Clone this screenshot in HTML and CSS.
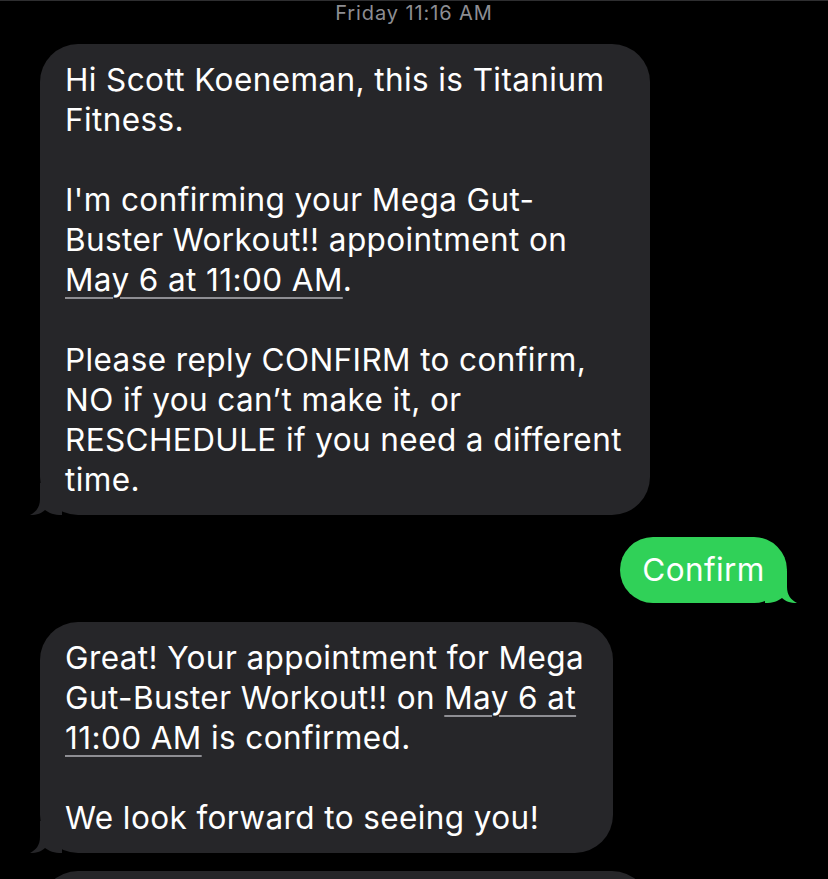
FILE: index.html
```html
<!DOCTYPE html>
<html>
<head>
<meta charset="utf-8">
<link rel="stylesheet" href="styles.css">
</head>
<body>
<div class="thread">
  <div class="stamp">Friday 11:16 AM</div>

  <div class="bubble in b1">
    <p>Hi Scott Koeneman, this is Titanium<br>Fitness.</p>
    <p>I'm confirming your Mega Gut-<br>Buster Workout!! appointment on<br><span class="link">May 6 at 11:00 AM</span>.</p>
    <p>Please reply CONFIRM to confirm,<br>NO if you can’t make it, or<br>RESCHEDULE if you need a different<br>time.</p>
    <svg class="tail tail-l" viewBox="0 0 32 32" aria-hidden="true"><path d="M10 0 L10 16 C10 24 6 29 0 32 C7 32 12 30 15 27 C19 30 24 32 32 32 L32 0 Z"/></svg>
  </div>

  <div class="bubble out">
    <p>Confirm</p>
    <svg class="tail tail-r" viewBox="0 0 32 32" aria-hidden="true"><path d="M22 0 L22 16 C22 24 26 29 32 32 C25 32 20 30 17 27 C13 30 8 32 0 32 L0 0 Z"/></svg>
  </div>

  <div class="bubble in b3">
    <p>Great! Your appointment for Mega<br>Gut-Buster Workout!! on <span class="link">May 6 at</span><br><span class="link">11:00 AM</span> is confirmed.</p>
    <p>We look forward to seeing you!</p>
    <svg class="tail tail-l" viewBox="0 0 32 32" aria-hidden="true"><path d="M10 0 L10 16 C10 24 6 29 0 32 C7 32 12 30 15 27 C19 30 24 32 32 32 L32 0 Z"/></svg>
  </div>

  <div class="bubble in b4"></div>
</div>
</body>
</html>
```

FILE: styles.css
```css
html, body {
  margin: 0;
  padding: 0;
  background: #000;
}

body {
  font-family: "Inter", "Liberation Sans", sans-serif;
  color: #fff;
  border-top: 1px solid #2e2e30;
  overflow: hidden;
}

.thread {
  display: flex;
  flex-direction: column;
  padding: 0 0 40px 40px;
}

.stamp {
  text-align: center;
  color: #8d8d92;
  font-size: 20px;
  font-weight: 400;
  letter-spacing: 0.9px;
  line-height: 24px;
  margin-left: -40px;
}

.bubble {
  position: relative;
  box-sizing: border-box;
  border-radius: 38px;
  font-size: 31.5px;
  letter-spacing: 0.4px;
  line-height: 40px;
  white-space: nowrap;
}

.bubble p {
  margin: 0;
}

.bubble p + p {
  margin-top: 40px;
}

.in {
  background: #262629;
  align-self: flex-start;
  padding: 16px 25px 15px 25px;
}

.b1 {
  width: 610px;
  margin-top: 19px;
}

.out {
  align-self: flex-end;
  background: #30d158;
  width: 167px;
  margin: 22px 41px 0 0;
  padding: 13px 0;
  text-align: center;
}

.b3 {
  width: 573px;
  margin-top: 19px;
}

.b4 {
  width: 610px;
  height: 80px;
  margin-top: 18px;
}

.link {
  text-decoration: underline;
  text-decoration-color: #8e8e93;
  text-decoration-thickness: 2px;
  text-underline-offset: 6px;
}

.tail {
  position: absolute;
  bottom: 0;
  width: 32px;
  height: 32px;
}

.tail-l {
  left: -10px;
  fill: #262629;
}

.tail-r {
  right: -10px;
  fill: #30d158;
}
```
